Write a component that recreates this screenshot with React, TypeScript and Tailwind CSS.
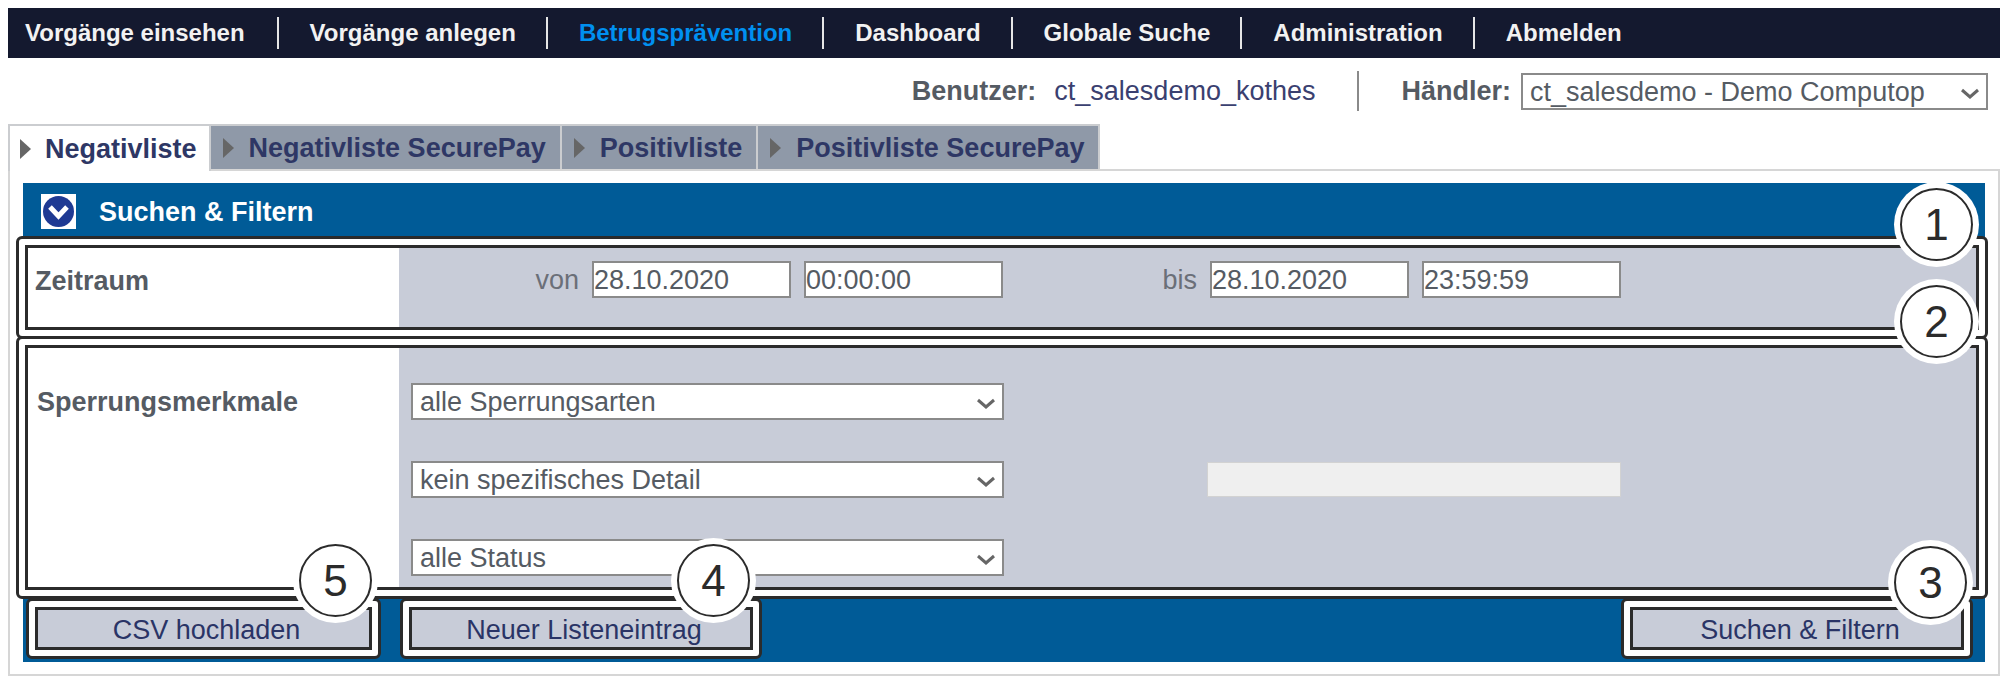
import type { ReactNode } from "react";
import clsx from "clsx";

const navItems = [
  "Vorgänge einsehen",
  "Vorgänge anlegen",
  "Betrugsprävention",
  "Dashboard",
  "Globale Suche",
  "Administration",
  "Abmelden",
];

const tabs = [
  "Negativliste",
  "Negativliste SecurePay",
  "Positivliste",
  "Positivliste SecurePay",
];

interface SelectBoxProps {
  id: string;
  value: string;
  label?: string;
  className?: string;
}

function SelectBox({ id, value, label, className }: SelectBoxProps) {
  return (
    <div className={clsx("relative", className)}>
      <select
        id={id}
        aria-label={label}
        className="block h-[37px] w-full appearance-none border-2 border-[#8a8a8a] bg-white pt-px pr-9 pl-[7px] leading-8 text-[#555b63]"
      >
        <option>{value}</option>
      </select>
      <svg
        className="pointer-events-none absolute top-[15px] right-2 h-3 w-5"
        viewBox="0 0 20 12"
        fill="none"
        stroke="#666"
        strokeWidth="3"
      >
        <path d="M2 2l8 7 8-7" />
      </svg>
    </div>
  );
}

function TextBox({ label, value }: { label: string; value: string }) {
  return (
    <input
      type="text"
      aria-label={label}
      defaultValue={value}
      className="h-[37px] w-[199px] border-2 border-[#8a8a8a] bg-white pt-px leading-8 text-[#555b63]"
    />
  );
}

// Numbered callout that sits on the edge of a frame
function Badge({ number, className }: { number: number; className: string }) {
  return (
    <div
      className={clsx(
        "absolute z-10 size-[85px] rounded-full bg-white p-1.5",
        className
      )}
    >
      <div className="flex size-full items-center justify-center rounded-full border-2 border-[#2b2b2b] text-[44px] leading-none text-[#2b2b2b]">
        {number}
      </div>
    </div>
  );
}

interface FrameProps {
  children: ReactNode;
  badge: ReactNode;
  className?: string;
}

function Frame({ children, badge, className }: FrameProps) {
  return (
    <div
      className={clsx(
        "relative rounded-md border-3 border-[#2b2b2b] bg-white p-1.5",
        className
      )}
    >
      <div className="border-3 border-[#2b2b2b]">{children}</div>
      {badge}
    </div>
  );
}

function ActionButton({ children }: { children: ReactNode }) {
  return (
    <button
      type="button"
      className="block h-[37px] w-full bg-[#c8ccd8] pt-0.5 pl-1.5 leading-9 text-[#2a3466]"
    >
      {children}
    </button>
  );
}

export default function App() {
  return (
    <div className="bg-white pt-2 pr-1 pb-2 pl-2 font-['Liberation_Sans',Arial,sans-serif] text-[27px] leading-8 text-[#555b63]">
      <nav className="h-[50px] bg-[#14192f]">
        <ul className="flex h-full items-center text-2xl font-bold text-[#f2f2f2]">
          {navItems.map((item, index) => (
            <li
              key={item}
              className={clsx(
                "leading-8",
                index === 0
                  ? "pr-8 pl-[17px]"
                  : "border-l-2 border-[#e6e6e6] pr-[30px] pl-[31px]"
              )}
            >
              <a
                href="#"
                className={clsx(
                  "whitespace-nowrap",
                  item === "Betrugsprävention" && "text-[#0090f0]"
                )}
              >
                {item}
              </a>
            </li>
          ))}
        </ul>
      </nav>

      <div className="flex h-[66px] items-center justify-end pr-3">
        <span className="font-bold">Benutzer:</span>
        <span className="ml-[18px] text-[#3a4070]">ct_salesdemo_kothes</span>
        <span className="mx-[42px] h-10 w-0.5 bg-[#8a8a8a]" />
        <label htmlFor="haendler" className="mr-2.5 font-bold">
          Händler:
        </label>
        <SelectBox
          id="haendler"
          value="ct_salesdemo - Demo Computop"
          className="w-[467px]"
        />
      </div>

      <div className="relative flex" role="tablist">
        {tabs.map((tab, index) => (
          <button
            key={tab}
            type="button"
            role="tab"
            aria-selected={index === 0}
            className={clsx(
              "flex items-center border-t-2 border-r-2 border-[#cbcdd0] font-bold whitespace-nowrap text-[#2e3765]",
              index === 0
                ? "-mb-0.5 h-[47px] gap-3.5 border-l-2 bg-white pr-3 pl-2.5"
                : "h-[45px] gap-[15px] bg-[#8f99a8] pr-3.5 pl-3"
            )}
          >
            <svg className="h-5 w-[11px]" viewBox="0 0 11 20" fill="#666">
              <path d="M0 0l11 10L0 20z" />
            </svg>
            {tab}
          </button>
        ))}
      </div>

      <main className="border-2 border-[#d6d6d6] px-[13px] py-3">
        <form className="bg-[#005b97]">
          <div className="flex h-[53px] items-center gap-[23px] pt-1 pl-[18px]">
            <svg className="size-[35px]" viewBox="0 0 35 35">
              <rect width="35" height="35" fill="#fff" />
              <circle cx="17.5" cy="17.5" r="15.5" fill="#1f3a93" />
              <path
                d="M9 13l8.500 9 8.500-9"
                fill="none"
                stroke="#fff"
                strokeWidth="5"
              />
            </svg>
            <h1 className="font-bold text-white">Suchen &amp; Filtern</h1>
          </div>

          <Frame
            className="-mr-[3px] -ml-[7px]"
            badge={<Badge number={1} className="-top-[57px] right-1.5" />}
          >
            <div className="grid grid-cols-[371px_1fr]">
              <div className="pt-[17px] pl-[7px] font-bold">Zeitraum</div>
              <div className="flex items-center gap-[13px] bg-[#c8ccd8] pt-[13px] pb-[29px]">
                <span className="w-[180px] pt-px text-right text-[#6b6f78]">
                  von
                </span>
                <TextBox label="Datum von" value="28.10.2020" />
                <TextBox label="Uhrzeit von" value="00:00:00" />
                <span className="w-[181px] pt-px text-right text-[#6b6f78]">
                  bis
                </span>
                <TextBox label="Datum bis" value="28.10.2020" />
                <TextBox label="Uhrzeit bis" value="23:59:59" />
              </div>
            </div>
          </Frame>

          <Frame
            className="-mt-[3px] -mr-[3px] -ml-[7px]"
            badge={<Badge number={2} className="-top-[60px] right-1.5" />}
          >
            <div className="grid grid-cols-[371px_1fr]">
              <label
                htmlFor="sperrungsart"
                className="pt-[38px] pl-[9px] font-bold"
              >
                Sperrungsmerkmale
              </label>
              <div className="flex flex-col gap-[41px] bg-[#c8ccd8] pt-[35px] pb-[11px] pl-3">
                <SelectBox
                  id="sperrungsart"
                  value="alle Sperrungsarten"
                  className="w-[593px]"
                />
                <div className="flex items-center">
                  <SelectBox
                    id="detail"
                    label="Detail"
                    value="kein spezifisches Detail"
                    className="w-[593px]"
                  />
                  <input
                    type="text"
                    disabled
                    aria-label="Detailwert"
                    className="ml-[203px] h-[35px] w-[414px] border border-[#d2d2d2] bg-[#efefef]"
                  />
                </div>
                <SelectBox
                  id="status"
                  label="Status"
                  value="alle Status"
                  className="w-[593px]"
                />
              </div>
            </div>
          </Frame>

          <div className="-mt-px flex pr-3 pb-[3px] pl-[3px]">
            <Frame
              className="w-[355px]"
              badge={<Badge number={5} className="-top-[63px] right-0" />}
            >
              <ActionButton>CSV hochladen</ActionButton>
            </Frame>
            <Frame
              className="ml-[19px] w-[362px]"
              badge={<Badge number={4} className="-top-[63px] right-[3px]" />}
            >
              <ActionButton>Neuer Listeneintrag</ActionButton>
            </Frame>
            <Frame
              className="ml-auto w-[352px]"
              badge={<Badge number={3} className="-top-[61px] -right-[3px]" />}
            >
              <ActionButton>Suchen &amp; Filtern</ActionButton>
            </Frame>
          </div>
        </form>
      </main>
    </div>
  );
}
